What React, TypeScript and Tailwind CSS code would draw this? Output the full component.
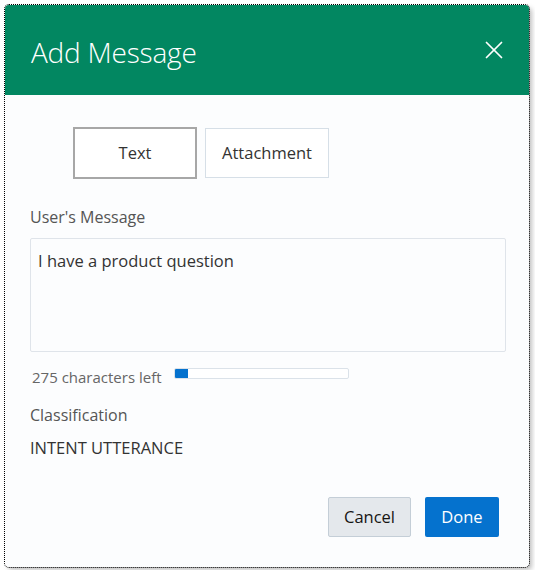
import { X } from 'lucide-react'

const FONT = { fontFamily: '"Open Sans", "Noto Sans", sans-serif' }

export default function App() {
  return (
    <div className="w-[535px] h-[570px] bg-white pl-[5px] pt-[5px]" style={FONT}>
      <div className="w-[524px] h-[562px] outline-1 outline-dotted outline-black shadow-[3px_3px_5px_rgba(0,0,0,0.25)] rounded-[4px] bg-[#fcfdfe] flex flex-col">
        {/* header */}
        <div className="h-[90px] bg-[#028761] rounded-t-[4px] flex items-center justify-between pl-[26px] pr-[20px]">
          <h1 className="text-white text-[28px] font-light tracking-[-0.2px] leading-none mt-[4px]">Add Message</h1>
          <X className="text-white w-[30px] h-[30px]" strokeWidth={1.4} />
        </div>

        {/* body */}
        <div className="flex-1 flex flex-col pl-[25px] pr-[23px]">
          <div className="flex gap-[8px] mt-[32px] ml-[43px]">
            <button className="w-[124px] h-[52px] border-2 border-[#a7a7a7] text-[16.5px] text-[#333] bg-white">Text</button>
            <button className="w-[124px] h-[50px] mt-[1px] border border-[#d6dfe7] text-[16.5px] text-[#333] bg-white">Attachment</button>
          </div>

          <label className="mt-[28px] text-[16px] text-[#555] leading-[20px]">User's Message</label>
          <div className="mt-[11px] h-[114px] border border-[#dfe4ea] rounded-[2px] bg-[#fcfdfe] px-[7px] pt-[10px] text-[16.5px] text-[#333] leading-[24px]">
            I have a product question
          </div>

          <div className="flex items-center mt-[15px] ml-[2px]">
            <span className="text-[15px] text-[#666] leading-[20px]">275 characters left</span>
            <div className="ml-[12px] -mt-[8px] w-[175px] h-[11px] border border-[#dbe2e9] rounded-[2px] bg-white overflow-hidden">
              <div className="h-full bg-[#0572ce]" style={{ width: '8%' }} />
            </div>
          </div>

          <div className="mt-[18px] text-[16px] text-[#555] leading-[20px]">Classification</div>
          <div className="mt-[13px] text-[16.5px] text-[#333] leading-[20px]">INTENT UTTERANCE</div>

          <div className="flex justify-end gap-[14px] mt-[39px] mr-[7px]">
            <button className="w-[83px] h-[40px] bg-[#e4e8ec] border border-[#c4ced7] rounded-[2px] text-[16.5px] text-[#161513]">Cancel</button>
            <button className="w-[74px] h-[40px] bg-[#0572ce] rounded-[2px] text-[16.5px] text-white">Done</button>
          </div>
        </div>
      </div>
    </div>
  )
}
